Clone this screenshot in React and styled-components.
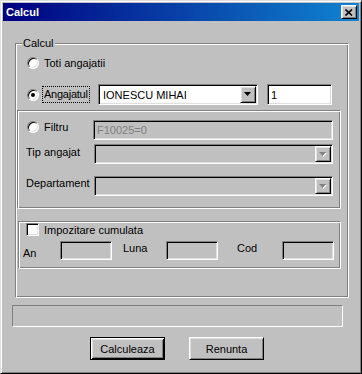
import styled, { createGlobalStyle, css } from 'styled-components';

const GlobalStyle = createGlobalStyle`
    html, body {
        margin: 0;
        padding: 0;
        background: #c0c0c0;
        overflow: hidden;
    }
    * {
        box-sizing: border-box;
    }
`;

const raised = css`
    border: 1px solid;
    border-color: #fff #000 #000 #fff;
    box-shadow: inset 1px 1px #dfdfdf, inset -1px -1px #808080;
`;
const sunken = css`
    border: 1px solid;
    border-color: #808080 #fff #fff #808080;
    box-shadow: inset 1px 1px #000, inset -1px -1px #dfdfdf;
`;
const etched = css`
    border: 1px solid;
    border-color: #808080 #fff #fff #808080;
    box-shadow: inset 1px 1px #fff, inset -1px -1px #808080;
`;

const Window = styled.div`
    width: 362px;
    height: 374px;
    border: 1px solid;
    border-color: #dfdfdf #000 #000 #dfdfdf;
    box-shadow: inset 1px 1px #fff, inset -1px -1px #808080;
    padding: 2px;
    background: #c0c0c0;
    display: flex;
    flex-direction: column;
    font-family: "Liberation Sans", Arial, sans-serif;
    font-size: 11px;
    color: #000;
`;
const TitleBar = styled.div`
    height: 18px;
    flex-shrink: 0;
    display: flex;
    align-items: center;
    justify-content: space-between;
    padding: 0 2px 0 3px;
    background: linear-gradient(to right, #000080, #1084d0);
`;
const Title = styled.span`
    color: #fff;
    font-weight: bold;
    font-size: 11px;
`;
const CloseButton = styled.div`
    ${raised};
    width: 16px;
    height: 14px;
    background: #c0c0c0;
    display: flex;
    align-items: center;
    justify-content: center;
`;
const Body = styled.div`
    display: flex;
    flex-direction: column;
    padding-top: 22px;
`;
const GroupBox = styled.div`
    ${etched};
    position: relative;
    margin-left: 12px;
    width: 334px;
    height: 255px;
    display: flex;
    flex-direction: column;
`;
const Legend = styled.span`
    position: absolute;
    top: -7px;
    left: 6px;
    padding: 0 1px;
    line-height: 13px;
    background: #c0c0c0;
`;
const Row = styled.div`
    display: flex;
    align-items: ${(p) => p.$align || 'center'};
    margin-top: ${(p) => p.$top}px;
    padding-left: ${(p) => p.$left || 0}px;
    height: ${(p) => p.$height}px;
`;
const RadioOption = styled.div`
    display: flex;
    align-items: center;
    height: 14px;
    width: ${(p) => (p.$width ? `${p.$width}px` : 'auto')};
    flex-shrink: 0;
`;
const RadioCircle = styled.span`
    position: relative;
    width: 12px;
    height: 12px;
    flex-shrink: 0;
    border-radius: 50%;
    background: #fff;
    border: 1px solid;
    border-color: #808080 #fff #fff #808080;
    box-shadow: inset 1px 1px #000, inset -1px -1px #dfdfdf;
    ${(p) => p.$checked && css`
        &::after {
            content: '';
            position: absolute;
            left: 3px;
            top: 3px;
            width: 4px;
            height: 4px;
            border-radius: 50%;
            background: #000;
        }
    `}
`;
const OptionLabel = styled.span`
    margin-left: ${(p) => (p.$focused ? 3 : 5)}px;
    line-height: 14px;
    white-space: nowrap;
    ${(p) => p.$focused && css`
        width: 48px;
        height: 17px;
        line-height: 15px;
        padding-left: 1px;
        letter-spacing: -0.25px;
        border: 1px dotted #000;
    `}
`;
const CheckBox = styled.span`
    ${sunken};
    width: 13px;
    height: 13px;
    flex-shrink: 0;
    background: #fff;
`;
const Combo = styled.div`
    ${sunken};
    width: ${(p) => p.$width}px;
    height: ${(p) => p.$height}px;
    margin-left: ${(p) => p.$left || 0}px;
    padding: 1px;
    display: flex;
    align-items: center;
    flex-shrink: 0;
    background: ${(p) => (p.$disabled ? '#c0c0c0' : '#fff')};
`;
const ComboText = styled.span`
    flex: 1;
    padding-left: 3px;
    white-space: nowrap;
`;
const DropButton = styled.div`
    ${raised};
    width: 16px;
    height: 100%;
    background: #c0c0c0;
    display: flex;
    align-items: center;
    justify-content: center;
`;
const TextBox = styled.div`
    ${sunken};
    width: ${(p) => p.$width}px;
    height: ${(p) => p.$height}px;
    margin-left: ${(p) => p.$left || 0}px;
    flex-shrink: 0;
    padding-left: 3px;
    display: flex;
    align-items: center;
    background: ${(p) => (p.$disabled ? '#c0c0c0' : '#fff')};
    color: ${(p) => (p.$disabled ? '#808080' : '#000')};
`;
const Panel = styled.div`
    ${etched};
    margin-top: ${(p) => p.$top}px;
    margin-left: ${(p) => p.$left}px;
    width: ${(p) => p.$width}px;
    height: ${(p) => p.$height}px;
    display: flex;
    flex-direction: column;
`;
const FieldLabel = styled.span`
    width: ${(p) => p.$width}px;
    margin-left: ${(p) => p.$left || 0}px;
    margin-top: ${(p) => p.$offset || 0}px;
    line-height: 14px;
    flex-shrink: 0;
    white-space: nowrap;
`;
const StatusField = styled.div`
    border: 1px solid;
    border-color: #808080 #fff #fff #808080;
    margin: 7px 0 0 9px;
    width: 331px;
    height: 22px;
`;
const ButtonRow = styled.div`
    display: flex;
    gap: 24px;
    margin-top: 10px;
    padding-left: 87px;
`;
const Button = styled.div`
    width: 75px;
    height: 23px;
    display: flex;
    align-items: center;
    justify-content: center;
    background: #c0c0c0;
    ${(p) => (p.$default
        ? css`
            border: 1px solid #000;
            box-shadow: inset 1px 1px #fff, inset -1px -1px #000, inset 2px 2px #dfdfdf, inset -2px -2px #808080;
        `
        : raised)}
`;

const Arrow = ({ disabled }) => (
    <svg width="8" height="5" viewBox="0 0 8 5">
        {disabled && <polygon points="1,1 8,1 4.5,5" fill="#fff" />}
        <polygon points="0,0 7,0 3.5,4" fill={disabled ? '#808080' : '#000'} />
    </svg>
);

const CloseIcon = () => (
    <svg width="8" height="7" viewBox="0 0 8 7">
        <path d="M0.5 0.5 L7 6.5 M7 0.5 L0.5 6.5" stroke="#000" strokeWidth="1.6" fill="none" />
    </svg>
);

const App = () => {
  return (
    <>
    <GlobalStyle />
    <Window>
        <TitleBar>
            <Title>Calcul</Title>
            <CloseButton><CloseIcon /></CloseButton>
        </TitleBar>
        <Body>
            <GroupBox>
                <Legend>Calcul</Legend>
                <Row $top={13} $left={11} $height={12}>
                    <RadioCircle />
                    <OptionLabel>Toti angajatii</OptionLabel>
                </Row>
                <Row $top={15} $left={11} $height={21}>
                    <RadioCircle $checked />
                    <OptionLabel $focused>Angajatul</OptionLabel>
                    <Combo $width={160} $height={21} $left={8}>
                        <ComboText>IONESCU MIHAI</ComboText>
                        <DropButton><Arrow /></DropButton>
                    </Combo>
                    <TextBox $width={65} $height={21} $left={9}>1</TextBox>
                </Row>
                <Panel $top={5} $left={1} $width={324} $height={99}>
                    <Row $top={9} $left={9} $height={20} $align="flex-start">
                        <RadioOption $width={66}>
                            <RadioCircle />
                            <OptionLabel>Filtru</OptionLabel>
                        </RadioOption>
                        <TextBox $width={240} $height={20} $disabled>F10025=0</TextBox>
                    </Row>
                    <Row $top={4} $height={20} $align="flex-start">
                        <FieldLabel $width={68} $left={8} $offset={1}>Tip angajat</FieldLabel>
                        <Combo $width={239} $height={20} $disabled>
                            <ComboText />
                            <DropButton><Arrow disabled /></DropButton>
                        </Combo>
                    </Row>
                    <Row $top={12} $height={20} $align="flex-start">
                        <FieldLabel $width={68} $left={8}>Departament</FieldLabel>
                        <Combo $width={239} $height={20} $disabled>
                            <ComboText />
                            <DropButton><Arrow disabled /></DropButton>
                        </Combo>
                    </Row>
                </Panel>
                <Panel $top={12} $left={2} $width={323} $height={48}>
                    <Row $top={1} $left={7} $height={13}>
                        <CheckBox />
                        <OptionLabel>Impozitare cumulata</OptionLabel>
                    </Row>
                    <Row $top={5} $left={4} $height={19} $align="flex-start">
                        <FieldLabel $width={37} $offset={5}>An</FieldLabel>
                        <TextBox $width={52} $height={19} $disabled />
                        <FieldLabel $width={43} $left={11}>Luna</FieldLabel>
                        <TextBox $width={52} $height={19} $disabled />
                        <FieldLabel $width={45} $left={19}>Cod</FieldLabel>
                        <TextBox $width={52} $height={19} $disabled />
                    </Row>
                </Panel>
            </GroupBox>
            <StatusField />
            <ButtonRow>
                <Button $default>Calculeaza</Button>
                <Button>Renunta</Button>
            </ButtonRow>
        </Body>
    </Window>
    </>
  );
};

export default App;
